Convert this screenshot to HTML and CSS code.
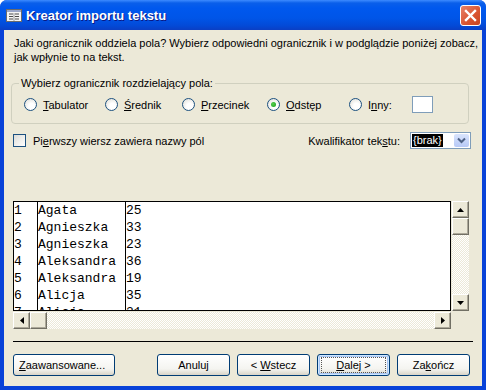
FILE: index.html
```html
<!DOCTYPE html>
<html>
  <head>
    <title>Kreator importu tekstu</title>
    <meta charset="UTF-8">
    <link rel="stylesheet" href="styles.css">
  </head>
  <body>
    <div class="window">
      <div class="titlebar">
        <svg class="app-icon" width="16" height="14" viewBox="0 0 16 14">
          <rect x="0.5" y="0.5" width="15" height="12" fill="#f4f4f4" stroke="#6b6b6b"/>
          <rect x="1" y="1" width="14" height="2" fill="#9aa6c8"/>
          <path d="M3 5h4M3 7.5h4M3 10h4M9 5h4M9 7.5h4M9 10h4" stroke="#4a4a4a" stroke-width="1"/>
          <path d="M8 4v8" stroke="#9a9a9a"/>
        </svg>
        <span class="title">Kreator importu tekstu</span>
        <div class="close">
          <svg width="13" height="13" viewBox="0 0 13 13">
            <path d="M2 2L11 11M11 2L2 11" stroke="#fff" stroke-width="2.4" stroke-linecap="square"/>
          </svg>
        </div>
      </div>

      <div class="body">
        <p class="intro">Jaki ogranicznik oddziela pola? Wybierz odpowiedni ogranicznik i w podglądzie poniżej zobacz,<br>jak wpłynie to na tekst.</p>

        <fieldset class="group">
          <legend>Wybierz ogranicznik rozdzielający pola:</legend>
          <div class="radios">
            <label class="radio"><span class="dot"></span><span><u>T</u>abulator</span></label>
            <label class="radio"><span class="dot"></span><span><u>Ś</u>rednik</span></label>
            <label class="radio"><span class="dot"></span><span><u>P</u>rzecinek</span></label>
            <label class="radio"><span class="dot on"></span><span><u>O</u>dstęp</span></label>
            <label class="radio"><span class="dot"></span><span>I<u>n</u>ny:</span><span class="other"></span></label>
          </div>
        </fieldset>

        <div class="options">
          <label class="check"><span class="box"></span><span>Pi<u>e</u>rwszy wiersz zawiera nazwy pól</span></label>
          <div class="qualifier">
            <span>Kwalifikator tek<u>s</u>tu:</span>
            <div class="combo">
              <span class="sel">{brak}</span>
              <span class="drop">
                <svg width="9" height="7" viewBox="0 0 9 7"><path d="M1 1.5L4.5 5L8 1.5" fill="none" stroke="#4d6185" stroke-width="2"/></svg>
              </span>
            </div>
          </div>
        </div>

        <div class="preview">
          <div class="preview-main">
            <div class="data">
              <div class="col c1">1<br>2<br>3<br>4<br>5<br>6<br>7</div>
              <div class="col c2">Agata<br>Agnieszka<br>Agnieszka<br>Aleksandra<br>Aleksandra<br>Alicja<br>Alicja</div>
              <div class="col c3">25<br>33<br>23<br>36<br>19<br>35<br>31</div>
            </div>
            <div class="vscroll">
              <span class="sbtn"><svg width="7" height="4" viewBox="0 0 7 4"><path d="M3.5 0L7 4H0z"/></svg></span>
              <span class="sbtn thumb"></span>
              <span class="track"></span>
              <span class="sbtn"><svg width="7" height="4" viewBox="0 0 7 4"><path d="M0 0H7L3.5 4z"/></svg></span>
            </div>
          </div>
          <div class="hscroll">
            <span class="sbtn"><svg width="4" height="7" viewBox="0 0 4 7"><path d="M4 0V7L0 3.5z"/></svg></span>
            <span class="sbtn thumb"></span>
            <span class="track"></span>
            <span class="sbtn"><svg width="4" height="7" viewBox="0 0 4 7"><path d="M0 0V7L4 3.5z"/></svg></span>
          </div>
        </div>

        <div class="sep"></div>

        <div class="buttons">
          <button class="btn wide"><u>Z</u>aawansowane...</button>
          <div class="spacer"></div>
          <button class="btn">Anuluj</button>
          <button class="btn">&lt; <u>W</u>stecz</button>
          <button class="btn default"><span class="focus"><u>D</u>alej &gt;</span></button>
          <button class="btn">Za<u>k</u>ończ</button>
        </div>
      </div>
    </div>
  </body>
</html>
```

FILE: styles.css
```css
* {
  box-sizing: border-box;
}
body {
  margin: 0;
  background: #fff;
  font-family: "Liberation Sans", Arial, sans-serif;
  font-size: 11px;
  color: #000;
}
u {
  text-decoration: underline;
  text-underline-offset: 1px;
}

/* window frame */
.window {
  width: 486px;
  height: 390px;
  display: flex;
  flex-direction: column;
  background: #0842d8;
  border-radius: 7px 7px 0 0;
  overflow: hidden;
}
.titlebar {
  height: 30px;
  flex: none;
  display: flex;
  align-items: center;
  padding: 0 5px 0 6px;
  background: linear-gradient(#3d8bff 0, #0a5fea 3px, #0058ee 8px, #0055e8 18px, #0349d6 26px, #0b3fc4 30px);
}
.app-icon {
  flex: none;
  margin-top: 1px;
}
.title {
  margin-left: 4px;
  color: #fff;
  font-weight: bold;
  font-size: 13px;
  text-shadow: 1px 1px #0a1883;
}
.close {
  margin-left: auto;
  width: 21px;
  height: 21px;
  border: 1px solid #fff;
  border-radius: 3px;
  display: flex;
  align-items: center;
  justify-content: center;
  background: linear-gradient(135deg, #e7826a, #d9532f 60%, #c94520);
}

.body {
  flex: 1;
  margin: 0 4px 4px 4px;
  background: #ece9d8;
  padding: 0 0 0 9px;
  display: flex;
  flex-direction: column;
}
.intro {
  margin: 6px 0 0 1px;
  line-height: 14px;
}

/* delimiter group */
.group {
  margin: 12px 0 0 -2px;
  width: 458px;
  border: 1px solid #d0d0bf;
  border-radius: 4px;
  padding: 6px 0 11px 12px;
}
.group legend {
  padding: 0 2px;
  margin-left: -5px;
  line-height: 14px;
}
.radios {
  display: grid;
  grid-template-columns: 81px 77px 85px 82px auto;
  align-items: center;
  height: 16px;
}
.radio {
  display: flex;
  align-items: center;
  gap: 6px;
}
.dot {
  width: 13px;
  height: 13px;
  border-radius: 50%;
  border: 1px solid #1c5180;
  background: radial-gradient(circle at 60% 65%, #fff 30%, #e0dfd8 90%);
  display: flex;
  align-items: center;
  justify-content: center;
}
.dot.on::after {
  content: "";
  width: 5px;
  height: 5px;
  border-radius: 50%;
  background: radial-gradient(circle at 40% 40%, #55d04f, #1a9a1a);
}
.other {
  width: 21px;
  height: 17px;
  margin-left: 14px;
  background: #fff;
  border: 1px solid #7f9db9;
}

/* checkbox + text qualifier */
.options {
  margin-top: 8px;
  height: 17px;
  display: flex;
  align-items: center;
}
.check {
  display: flex;
  align-items: center;
  gap: 7px;
}
.box {
  width: 13px;
  height: 13px;
  border: 1px solid #1c5180;
  background: linear-gradient(135deg, #dcdcd7, #fff);
}
.qualifier {
  margin-left: auto;
  margin-right: 11px;
  display: flex;
  align-items: center;
  gap: 10px;
}
.combo {
  width: 61px;
  height: 17px;
  border: 1px solid #7f9db9;
  background: #fff;
  display: flex;
  align-items: center;
  padding: 1px;
}
.sel {
  background: #000;
  color: #fff;
  height: 13px;
  line-height: 13px;
  padding: 0 1px;
}
.drop {
  margin-left: auto;
  width: 15px;
  height: 13px;
  border-radius: 2px;
  background: linear-gradient(#d9e4fd, #b7c9f6);
  display: flex;
  align-items: center;
  justify-content: center;
}

/* preview grid */
.preview {
  margin-top: 52px;
  width: 456px;
}
.preview-main {
  display: flex;
  gap: 1px;
}
.data {
  width: 438px;
  height: 110px;
  border: 1px solid #000;
  background: #fff;
  display: flex;
  overflow: hidden;
  font-family: "Liberation Mono", "Courier New", monospace;
  font-size: 13px;
  line-height: 17px;
}
.col {
  border-right: 1px solid #000;
  white-space: nowrap;
}
.c1 {
  width: 24px;
}
.c2 {
  width: 88px;
}
.c3 {
  flex: 1;
  border-right: none;
}
.sbtn {
  width: 17px;
  height: 17px;
  flex: none;
  background: #ece9d8;
  border: 1px solid;
  border-color: #fff #716f64 #716f64 #fff;
  box-shadow: inset -1px -1px #aca899;
  display: flex;
  align-items: center;
  justify-content: center;
}
.track {
  flex: 1;
  background: repeating-conic-gradient(#fff 0 25%, #ece9d8 0 50%) 0 0 / 2px 2px;
}
.vscroll {
  width: 17px;
  height: 110px;
  display: flex;
  flex-direction: column;
}
.hscroll {
  width: 438px;
  height: 17px;
  margin-top: 1px;
  display: flex;
}

.sep {
  margin-top: 12px;
  width: 460px;
  border-top: 1px solid #000;
}

/* bottom buttons */
.buttons {
  margin-top: 12px;
  display: flex;
  gap: 7px;
}
.spacer {
  width: 28px;
}
.btn {
  width: 73px;
  height: 22px;
  padding: 0;
  font: inherit;
  color: #000;
  border: 1px solid #003c74;
  border-radius: 3px;
  background: linear-gradient(#fff, #f4f4f0 70%, #d8d4c8);
}
.btn.wide {
  width: 102px;
  text-align: left;
  padding-left: 5px;
}
.btn.default {
  box-shadow: inset 0 0 0 1px #cee7ff, inset 0 0 0 2px #a8c6f4;
}
.focus {
  display: inline-block;
  width: 63px;
  padding: 1px 0;
  outline: 1px dotted #555;
}
```
